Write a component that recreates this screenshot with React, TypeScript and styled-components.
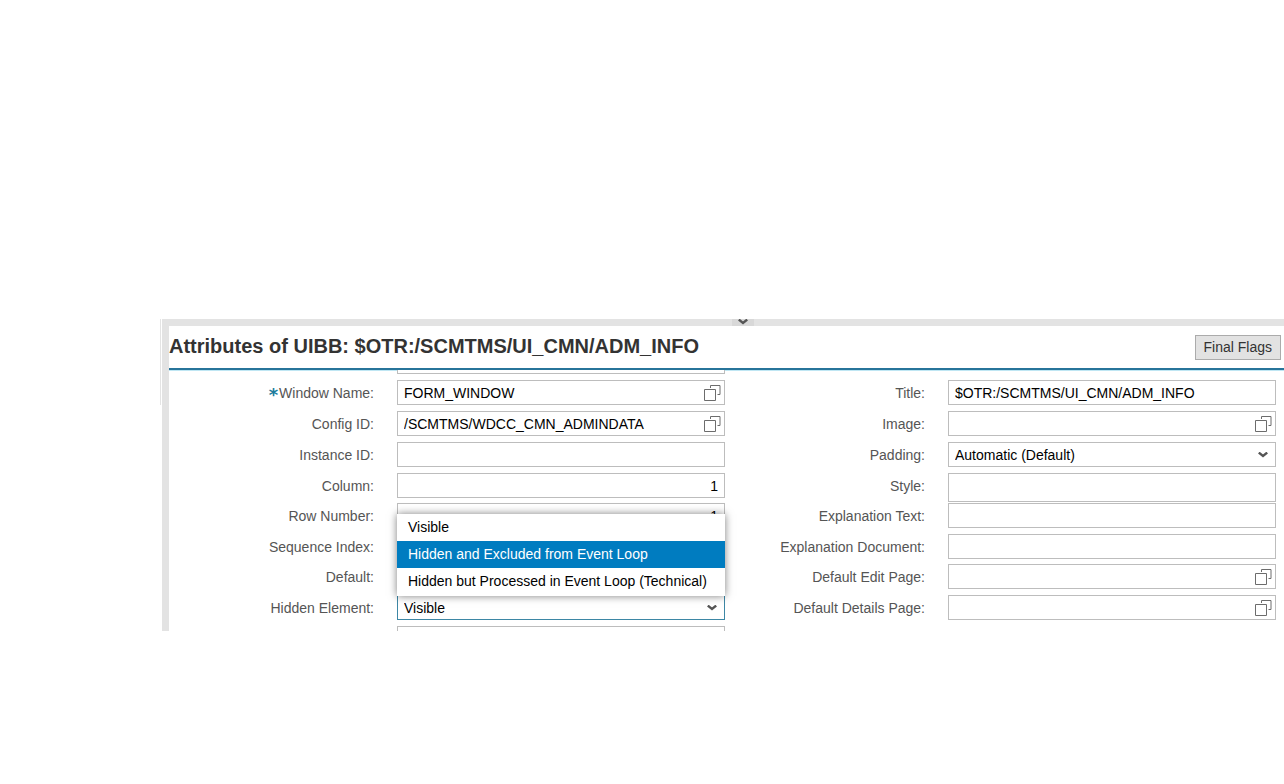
import React from 'react';
import styled, { createGlobalStyle, css } from 'styled-components';

const GlobalStyle = createGlobalStyle`
  *, *::before, *::after { box-sizing: border-box; }
  body {
    margin: 0;
    background: #fff;
    color: #000;
    font-family: "Liberation Sans", Arial, sans-serif;
    font-size: 14px;
  }
`;

const Page = styled.main`
  display: flex;
  padding: 319px 0 40px 160px;
`;

const NeighbourEdge = styled.div`
  flex: none;
  width: 2px;
  height: 86px;
  border-left: 1px solid #e4e4e4;
`;

const Workspace = styled.section`
  flex: 1;
  min-width: 0;
  border-left: 7px solid #e3e3e3;
`;

const Splitter = styled.div`
  display: flex;
  justify-content: center;
  height: 7px;
  padding-right: 10px;
  margin-left: -7px;
  padding-left: 49px;
  background: #e3e3e3;
`;

const SplitterHandle = styled.button`
  display: flex;
  align-items: flex-start;
  justify-content: center;
  width: 22px;
  height: 7px;
  padding: 0;
  border: 0;
  background: #d8d8d8;
  overflow: hidden;
`;

const Header = styled.header`
  display: flex;
  align-items: center;
  justify-content: space-between;
  height: 44px;
  padding-right: 3px;
  border-bottom: 2px solid #27749a;
  box-shadow: 0 1px 0 #bfe6f3;
`;

const Title = styled.h1`
  margin: 0;
  padding-bottom: 2px;
  color: #333;
  font-size: 20px;
  line-height: 24px;
`;

const FlagButton = styled.button`
  height: 25px;
  padding: 0 8px;
  border: 1px solid #ababab;
  background: #e2e2e2;
  color: #333;
  font: inherit;
  line-height: 23px;
  white-space: nowrap;
`;

const ScrollPane = styled.div`
  display: flex;
  height: 261px;
  padding-right: 8px;
  overflow: hidden;
`;

const Column = styled.div<{ $labelWidth: number }>`
  flex: 1 1 ${(p) => p.$labelWidth}px;
  display: grid;
  grid-template-columns: ${(p) => p.$labelWidth}px 1fr;
  grid-template-rows: 31px 31px 31px 31px 30px 31px 30px 31px 31px 31px;
  column-gap: 23px;
  min-width: 0;
  margin-top: -21px;
`;

const Label = styled.label`
  color: #555;
  line-height: 26px;
  text-align: right;
  white-space: nowrap;
`;

const Required = styled.span`
  margin-right: 1px;
  color: #1c7c9c;
  font-family: "DejaVu Sans", sans-serif;
  font-size: 18px;
  font-weight: bold;
  line-height: 18px;
  vertical-align: -3px;
`;

const Field = styled.div`
  position: relative;
  min-width: 0;
`;

const control = css`
  display: block;
  width: 100%;
  height: 25px;
  margin: 0;
  padding: 0 6px;
  border: 1px solid #bdbdbd;
  border-radius: 0;
  outline: 0;
  background: #fff;
  color: #000;
  font: inherit;
`;

const TextInput = styled.input<{ $numeric?: boolean }>`
  ${control}
  text-align: ${(p) => (p.$numeric ? 'right' : 'left')};
`;

const TextArea = styled.textarea`
  ${control}
  height: 29px;
  resize: none;
`;

const Select = styled.select<{ $focused?: boolean }>`
  ${control}
  border-color: ${(p) => (p.$focused ? '#3d87a5' : '#bdbdbd')};
  appearance: none;
`;

const HelpButton = styled.button`
  position: absolute;
  top: 4px;
  right: 4px;
  width: 17px;
  height: 17px;
  padding: 0;
  border: 0;
  background: none;
`;

const SelectArrow = styled.span`
  position: absolute;
  top: 10px;
  right: 8px;
  display: flex;
  pointer-events: none;
`;

const Popup = styled.ul`
  position: absolute;
  bottom: 30px;
  left: 0;
  z-index: 1;
  width: 100%;
  margin: 0;
  padding: 0 0 1px;
  background: #fff;
  box-shadow: 0 0 8px rgba(0, 0, 0, 0.5);
  list-style: none;
`;

const Option = styled.li`
  height: 27px;
  padding: 0 11px;
  line-height: 27px;
  white-space: nowrap;

  &[aria-selected='true'] {
    background: #007cc0;
    color: #fff;
  }
`;

const HelpSvg = styled.svg`
  display: block;
`;

const HelpIcon = () => (
  <HelpSvg width="17" height="17" viewBox="0 0 17 17" fill="none" stroke="#6c6c6c" aria-hidden="true">
    <path d="M.5 5.5H11.5V16.5H.5ZM6.5 4V1.5H16V10.5H13.5" />
  </HelpSvg>
);

const Chevron = () => (
  <svg width="10" height="6" viewBox="0 0 10 6" fill="none" stroke="#555" strokeWidth="2.4" aria-hidden="true">
    <path d="M.8 .6L5 4L9.2 .6" />
  </svg>
);

type FieldSpec = {
  id: string;
  label: string;
  kind?: 'text' | 'help' | 'number' | 'select' | 'area';
  value?: string;
  required?: boolean;
  options?: string[];
};

const leftFields: FieldSpec[] = [
  { id: 'window', label: 'Window Name:', kind: 'help', value: 'FORM_WINDOW', required: true },
  { id: 'config', label: 'Config ID:', kind: 'help', value: '/SCMTMS/WDCC_CMN_ADMINDATA' },
  { id: 'instance', label: 'Instance ID:' },
  { id: 'column', label: 'Column:', kind: 'number', value: '1' },
  { id: 'row', label: 'Row Number:', kind: 'number', value: '1' },
  { id: 'sequence', label: 'Sequence Index:' },
  { id: 'default', label: 'Default:' },
  {
    id: 'hidden',
    label: 'Hidden Element:',
    kind: 'select',
    value: 'Visible',
    options: ['Visible', 'Hidden and Excluded from Event Loop', 'Hidden but Processed in Event Loop (Technical)'],
  },
];

const rightFields: FieldSpec[] = [
  { id: 'title', label: 'Title:', value: '$OTR:/SCMTMS/UI_CMN/ADM_INFO' },
  { id: 'image', label: 'Image:', kind: 'help' },
  { id: 'padding', label: 'Padding:', kind: 'select', value: 'Automatic (Default)' },
  { id: 'style', label: 'Style:', kind: 'area' },
  { id: 'explanation', label: 'Explanation Text:' },
  { id: 'document', label: 'Explanation Document:' },
  { id: 'edit', label: 'Default Edit Page:', kind: 'help' },
  { id: 'details', label: 'Default Details Page:', kind: 'help' },
];

const FormRow = ({ id, label, kind = 'text', value = '', required, options }: FieldSpec) => (
  <>
    <Label htmlFor={id}>
      {required && <Required>*</Required>}
      {label}
    </Label>
    <Field>
      {kind === 'area' && <TextArea id={id} defaultValue={value} />}
      {kind === 'select' && (
        <>
          <Select id={id} defaultValue={value} $focused={Boolean(options)}>
            {(options ?? [value]).map((o) => (
              <option key={o}>{o}</option>
            ))}
          </Select>
          <SelectArrow>
            <Chevron />
          </SelectArrow>
        </>
      )}
      {(kind === 'text' || kind === 'help' || kind === 'number') && (
        <TextInput id={id} defaultValue={value} $numeric={kind === 'number'} />
      )}
      {kind === 'help' && (
        <HelpButton aria-label={`Choose ${label}`}>
          <HelpIcon />
        </HelpButton>
      )}
      {options && (
        <Popup role="listbox">
          {options.map((o, i) => (
            <Option key={o} role="option" aria-selected={i === 1}>
              {o}
            </Option>
          ))}
        </Popup>
      )}
    </Field>
  </>
);

export default function App() {
  return (
    <>
      <GlobalStyle />
      <Page>
        <NeighbourEdge />
        <Workspace>
          <Splitter>
            <SplitterHandle aria-label="Collapse">
              <Chevron />
            </SplitterHandle>
          </Splitter>
          <Header>
            <Title>Attributes of UIBB: $OTR:/SCMTMS/UI_CMN/ADM_INFO</Title>
            <FlagButton>Final Flags</FlagButton>
          </Header>
          <ScrollPane>
            <Column $labelWidth={205}>
              <span />
              <TextInput aria-label="Previous attribute" />
              {leftFields.map((f) => (
                <FormRow key={f.id} {...f} />
              ))}
              <span />
              <TextInput aria-label="Next attribute" />
            </Column>
            <Column $labelWidth={200}>
              <span />
              <span />
              {rightFields.map((f) => (
                <FormRow key={f.id} {...f} />
              ))}
            </Column>
          </ScrollPane>
        </Workspace>
      </Page>
    </>
  );
}
